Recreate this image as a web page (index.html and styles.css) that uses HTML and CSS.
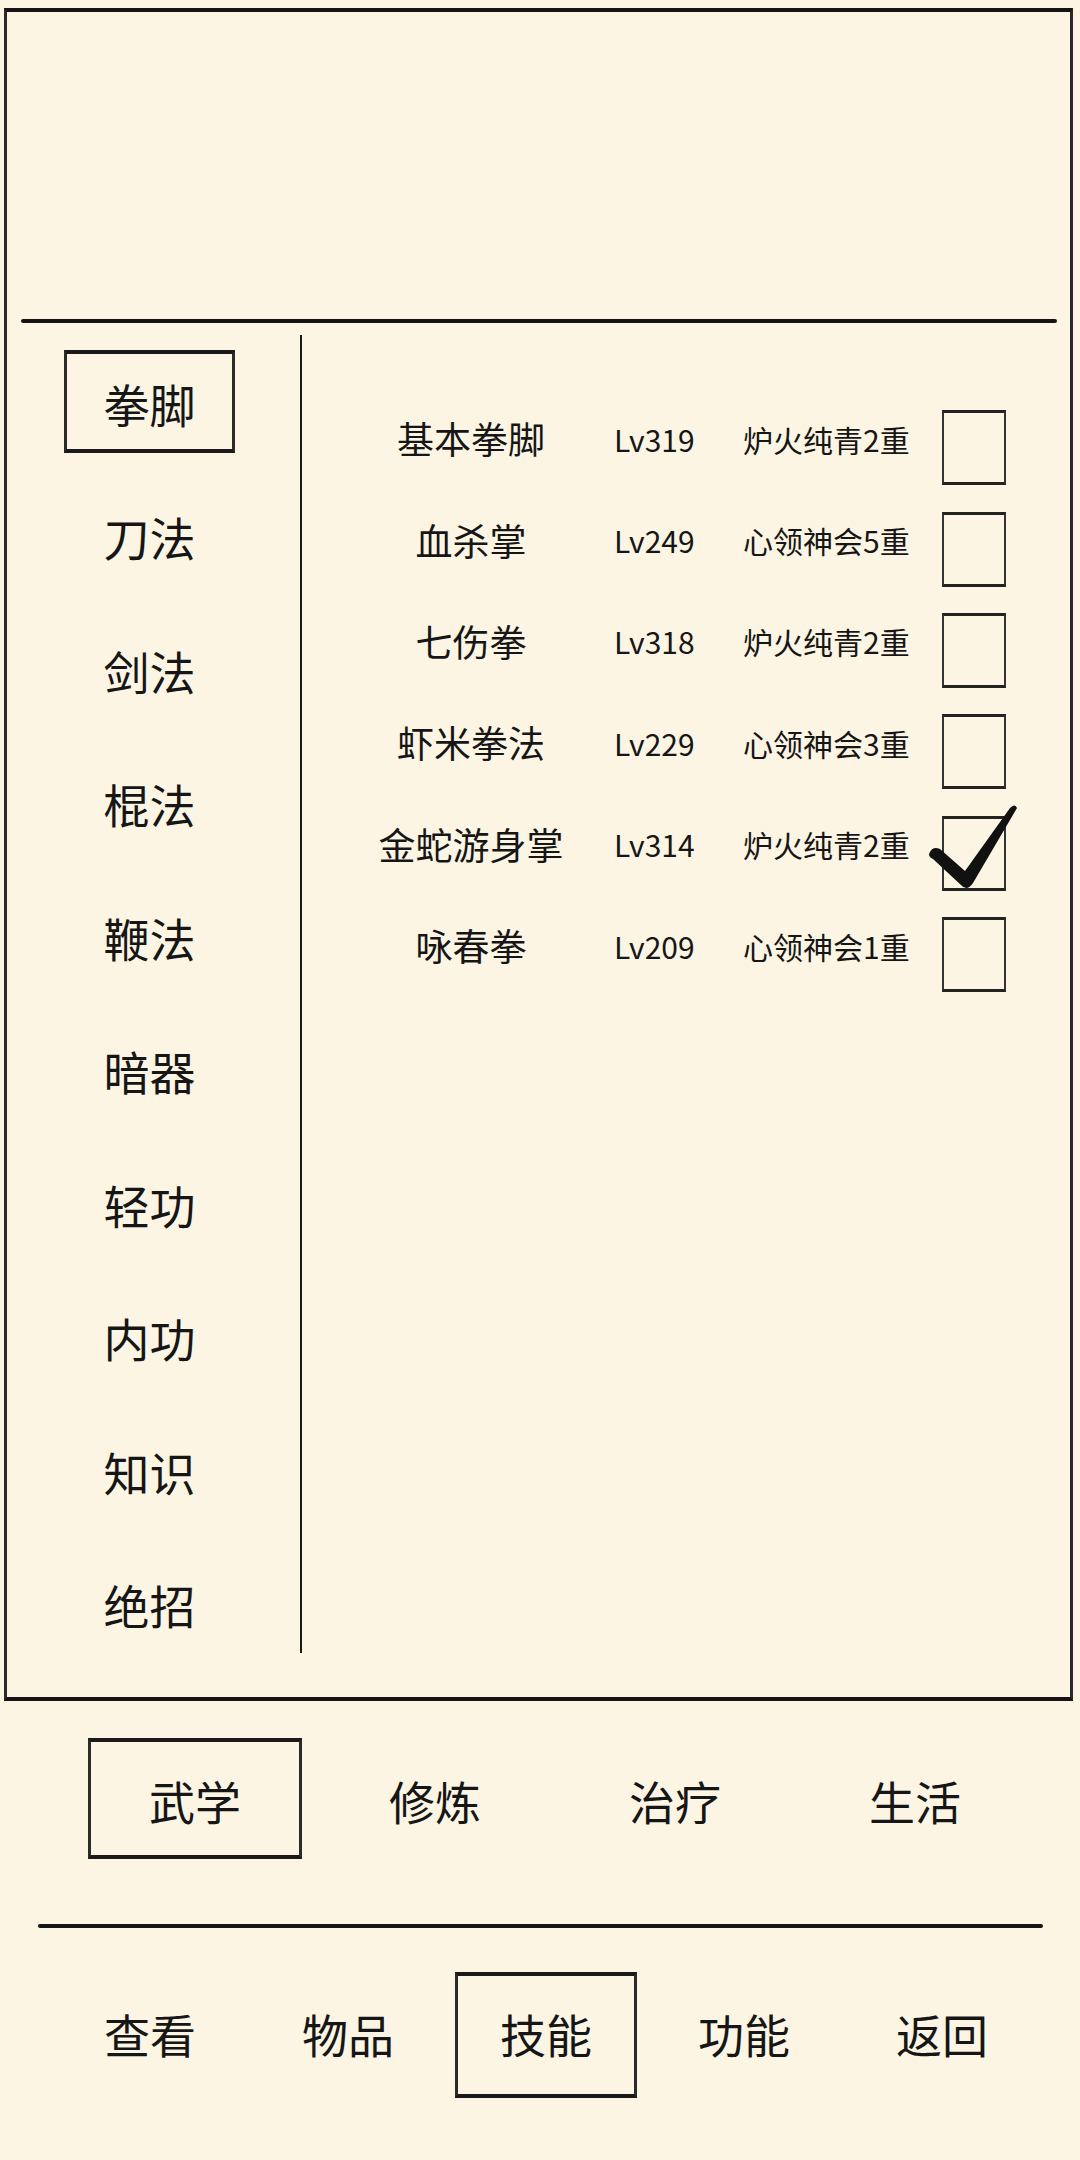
FILE: index.html
```html
<!DOCTYPE html>
<html lang="zh-CN">
<head>
<meta charset="utf-8">
<title>技能</title>
<link rel="stylesheet" href="styles.css">
</head>
<body>
<div class="frame">
  <div class="top-area"></div>
  <div class="hdiv"></div>
  <div class="main">
    <div class="cats">
      <div class="cat selected">拳脚</div>
      <div class="cat">刀法</div>
      <div class="cat">剑法</div>
      <div class="cat">棍法</div>
      <div class="cat">鞭法</div>
      <div class="cat">暗器</div>
      <div class="cat">轻功</div>
      <div class="cat">内功</div>
      <div class="cat">知识</div>
      <div class="cat">绝招</div>
    </div>
    <div class="vsep"></div>
    <div class="skills">
      <div class="row"><span class="name">基本拳脚</span><span class="lv">Lv319</span><span class="mastery">炉火纯青2重</span><span class="box"></span></div>
      <div class="row"><span class="name">血杀掌</span><span class="lv">Lv249</span><span class="mastery">心领神会5重</span><span class="box"></span></div>
      <div class="row"><span class="name">七伤拳</span><span class="lv">Lv318</span><span class="mastery">炉火纯青2重</span><span class="box"></span></div>
      <div class="row"><span class="name">虾米拳法</span><span class="lv">Lv229</span><span class="mastery">心领神会3重</span><span class="box"></span></div>
      <div class="row"><span class="name">金蛇游身掌</span><span class="lv">Lv314</span><span class="mastery">炉火纯青2重</span><span class="box checked"><svg class="check" viewBox="0 0 100 95" width="100" height="95"><path d="M6 51 Q9 45 16 48 L41 70 L86 7 Q91 2 93 7 L49 82 Q43 91 37 84 L9 58 Q3 55 6 51 Z" fill="#111"/></svg></span></div>
      <div class="row"><span class="name">咏春拳</span><span class="lv">Lv209</span><span class="mastery">心领神会1重</span><span class="box"></span></div>
    </div>
  </div>
</div>
<div class="subtabs">
  <div class="tab selected">武学</div>
  <div class="tab">修炼</div>
  <div class="tab">治疗</div>
  <div class="tab">生活</div>
</div>
<div class="bdiv"></div>
<div class="nav">
  <div class="nitem">查看</div>
  <div class="nitem">物品</div>
  <div class="nitem selected">技能</div>
  <div class="nitem">功能</div>
  <div class="nitem">返回</div>
</div>
</body>
</html>
```
FILE: styles.css
```css
html, body {
  margin: 0;
  padding: 0;
}
body {
  width: 1080px;
  height: 2160px;
  overflow: hidden;
  background: #fcf5e4;
  color: #161616;
  font-family: "Noto Sans CJK SC", "Noto Sans", sans-serif;
}
.frame {
  box-sizing: border-box;
  margin: 8px 7px 0 4px;
  height: 1693px;
  border-top: 4px solid #141414;
  border-left: 3px solid #2a2a2a;
  border-right: 3px solid #2a2a2a;
  border-bottom: 4px solid #141414;
  display: flex;
  flex-direction: column;
}
.top-area {
  height: 307px;
}
.hdiv {
  height: 4px;
  margin: 0 13px 0 14px;
  background: #141414;
  border-radius: 2px;
}
.main {
  display: flex;
  flex: 1;
}
.cats {
  box-sizing: border-box;
  width: 293px;
  padding: 27px 0 0 57px;
}
.cat {
  box-sizing: border-box;
  width: 171px;
  height: 103px;
  margin-bottom: 30.5px;
  display: flex;
  align-items: center;
  justify-content: center;
  font-size: 46px;
  line-height: 1;
  padding-top: 2px;
}
.cat.selected {
  border-top: 4px solid #1a1a1a;
  border-bottom: 4px solid #1a1a1a;
  border-left: 3px solid #2a2a2a;
  border-right: 3px solid #2a2a2a;
}
.vsep {
  width: 2px;
  height: 1318px;
  margin-top: 12px;
  background: #1a1a1a;
}
.skills {
  padding: 65px 0 0 69px;
}
.row {
  display: flex;
  align-items: center;
  height: 101.4px;
}
.name {
  width: 200px;
  text-align: center;
  font-size: 37px;
  line-height: 1;
}
.lv {
  margin-left: 43px;
  width: 129px;
  font-size: 30px;
  line-height: 1;
}
.mastery {
  width: 199px;
  font-size: 30px;
  line-height: 1;
}
.box {
  box-sizing: border-box;
  position: relative;
  width: 64px;
  height: 75px;
  margin-top: 18px;
  border-top: 3px solid #222;
  border-bottom: 3px solid #222;
  border-left: 2px solid #333;
  border-right: 2px solid #333;
}
.check {
  position: absolute;
  left: -20px;
  top: -18px;
}
.subtabs {
  display: flex;
  padding-left: 75px;
  margin-top: 37px;
}
.tab {
  box-sizing: border-box;
  width: 214px;
  height: 121px;
  margin: 0 13px;
  display: flex;
  align-items: center;
  justify-content: center;
  font-size: 46px;
  line-height: 1;
  padding-top: 3px;
}
.tab.selected {
  border-top: 4px solid #1a1a1a;
  border-bottom: 4px solid #1a1a1a;
  border-left: 3px solid #2a2a2a;
  border-right: 3px solid #2a2a2a;
}
.bdiv {
  height: 4px;
  margin: 65px 37px 0 38px;
  background: #141414;
  border-radius: 2px;
}
.nav {
  display: flex;
  padding-left: 51px;
  margin-top: 44px;
}
.nitem {
  box-sizing: border-box;
  width: 182px;
  height: 126px;
  margin: 0 8px;
  display: flex;
  align-items: center;
  justify-content: center;
  font-size: 46px;
  line-height: 1;
  padding-bottom: 4px;
}
.nitem.selected {
  border-top: 4px solid #1a1a1a;
  border-bottom: 4px solid #1a1a1a;
  border-left: 3px solid #2a2a2a;
  border-right: 3px solid #2a2a2a;
}
```
